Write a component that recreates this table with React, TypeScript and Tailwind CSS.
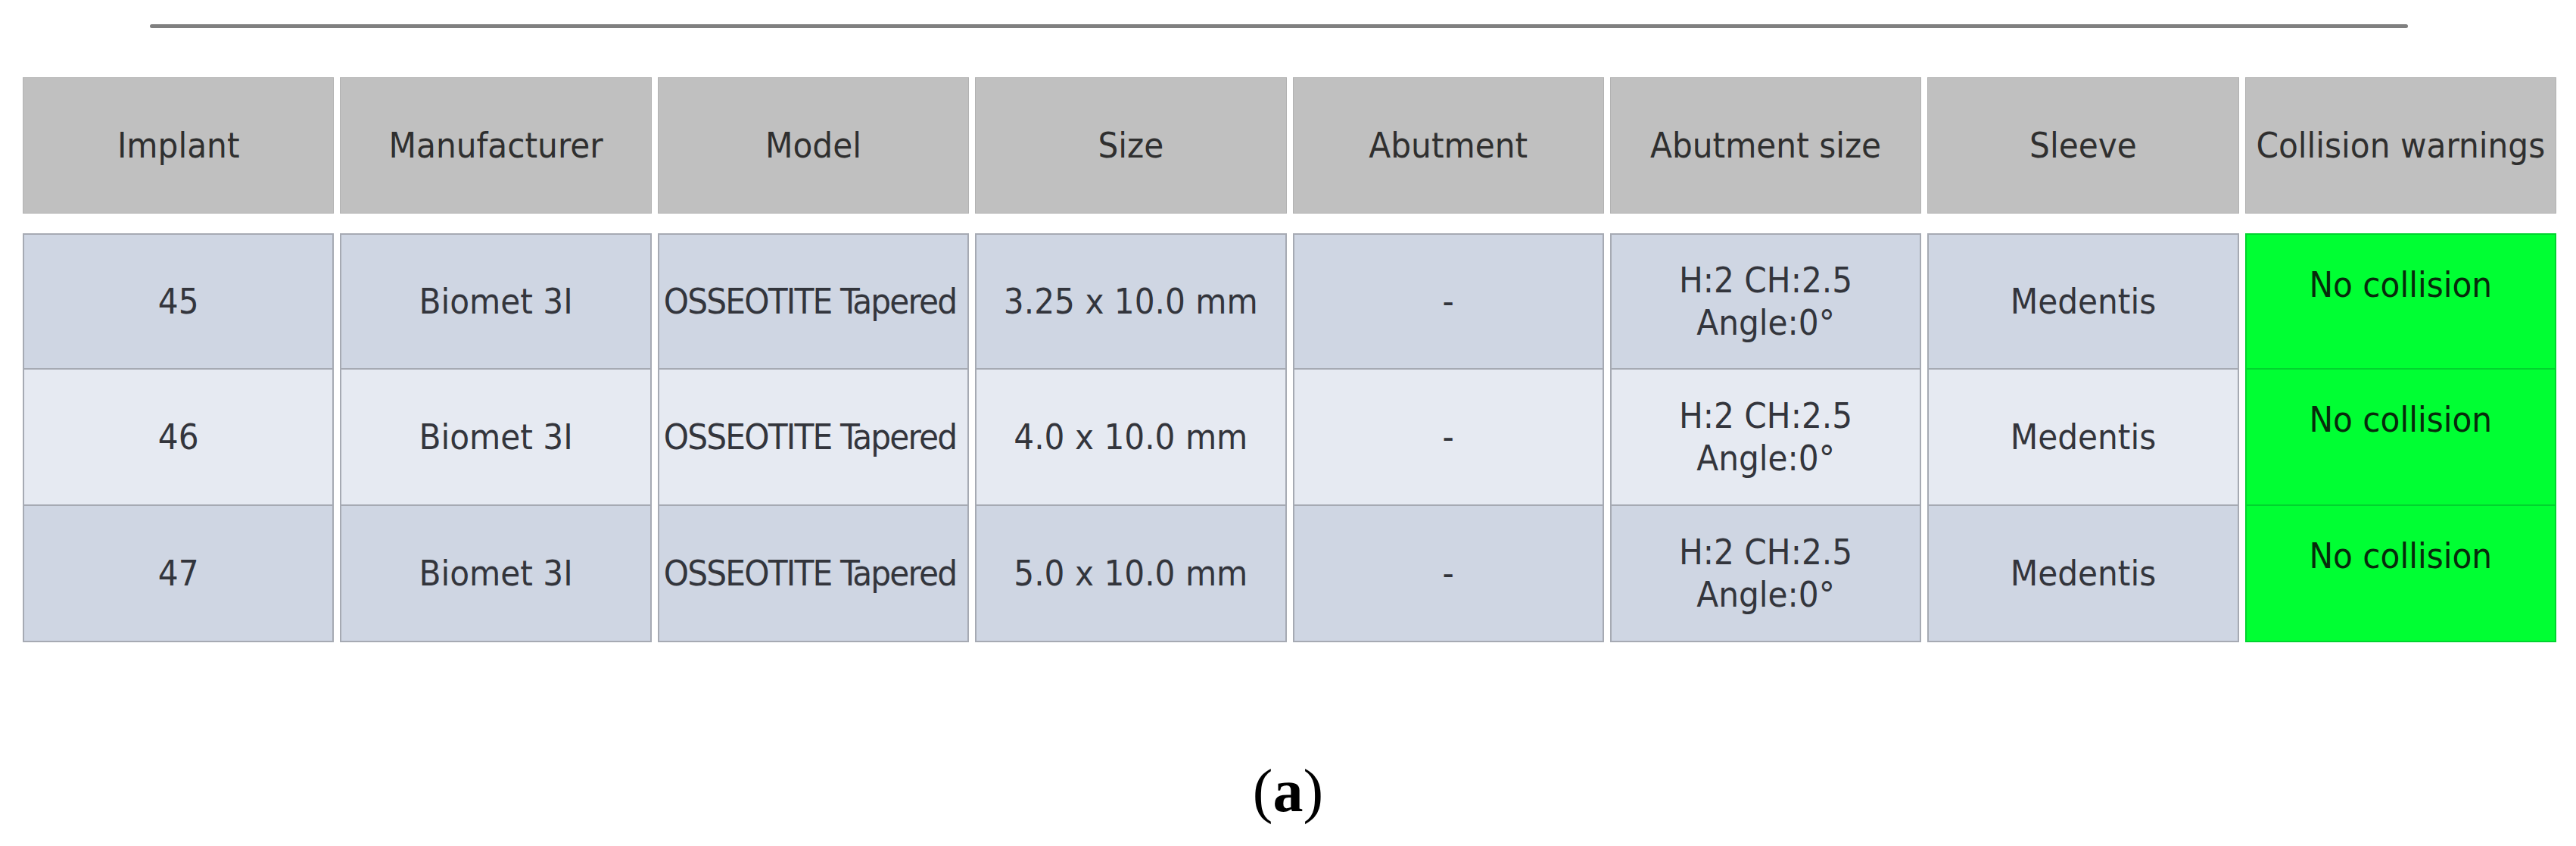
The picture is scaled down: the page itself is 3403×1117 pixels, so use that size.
const headers = [
  'Implant',
  'Manufacturer',
  'Model',
  'Size',
  'Abutment',
  'Abutment size',
  'Sleeve',
  'Collision warnings',
]

const rows = [
  { implant: '45', size: '3.25 x 10.0 mm' },
  { implant: '46', size: '4.0 x 10.0 mm' },
  { implant: '47', size: '5.0 x 10.0 mm' },
]

const font = "font-['DejaVu_Sans_Condensed','DejaVu_Sans',sans-serif]"

function BodyCell({
  children,
  even,
  first,
  className = '',
}: {
  children: React.ReactNode
  even: boolean
  first: boolean
  className?: string
}) {
  return (
    <div
      className={`h-[180px] flex items-center justify-center border-x-2 border-b-2 border-[#a6aab3] text-[#33353c] ${
        first ? 'border-t-2' : ''
      } ${even ? 'bg-[#e6eaf2]' : 'bg-[#cfd6e3]'} ${className}`}
    >
      {children}
    </div>
  )
}

export default function App() {
  return (
    <div className={`w-[3403px] h-[1117px] bg-white overflow-hidden ${font}`}>
      {/* top rule */}
      <div className="ml-[198px] mt-[32px] w-[2983px] h-[5px] bg-[#808080] rounded-full" />

      {/* header */}
      <div className="ml-[30px] mt-[65px] w-[3347px] grid grid-cols-8 gap-x-2">
        {headers.map((h) => (
          <div
            key={h}
            className="h-[180px] flex items-center justify-center bg-[#c0c0c0] border border-[#b2b2b2] text-[#2f2f2f] text-[47px] whitespace-nowrap overflow-hidden"
          >
            {h}
          </div>
        ))}
      </div>

      {/* body */}
      <div className="ml-[30px] mt-[26px] w-[3347px] grid grid-cols-8 gap-x-2 text-[47px] leading-[56px]">
        {rows.map((r, i) => {
          const even = i % 2 === 1
          const first = i === 0
          return [
            <BodyCell key={`${i}-a`} even={even} first={first}>
              {r.implant}
            </BodyCell>,
            <BodyCell key={`${i}-b`} even={even} first={first}>
              Biomet 3I
            </BodyCell>,
            <BodyCell
              key={`${i}-c`}
              even={even}
              first={first}
              className="justify-start pl-[6px] whitespace-nowrap tracking-[-1.8px] relative z-0"
            >
              OSSEOTITE Tapered
            </BodyCell>,
            <BodyCell key={`${i}-d`} even={even} first={first} className="relative z-10">
              {r.size}
            </BodyCell>,
            <BodyCell key={`${i}-e`} even={even} first={first}>
              -
            </BodyCell>,
            <BodyCell key={`${i}-f`} even={even} first={first} className="flex-col">
              <span>H:2 CH:2.5</span>
              <span>Angle:0°</span>
            </BodyCell>,
            <BodyCell key={`${i}-g`} even={even} first={first}>
              Medentis
            </BodyCell>,
            <div
              key={`${i}-h`}
              className={`h-[180px] flex items-start justify-center pt-[38px] bg-[#00ff33] border-x-2 border-b-2 border-[#00d42e] text-[#072a0b] ${
                first ? 'border-t-2' : ''
              }`}
            >
              No collision
            </div>,
          ]
        })}
      </div>

      {/* caption */}
      <div className="mt-[156px] text-center text-[80px] leading-[80px] text-black font-['Liberation_Serif',serif]">
        (<span className="font-bold">a</span>)
      </div>
    </div>
  )
}
